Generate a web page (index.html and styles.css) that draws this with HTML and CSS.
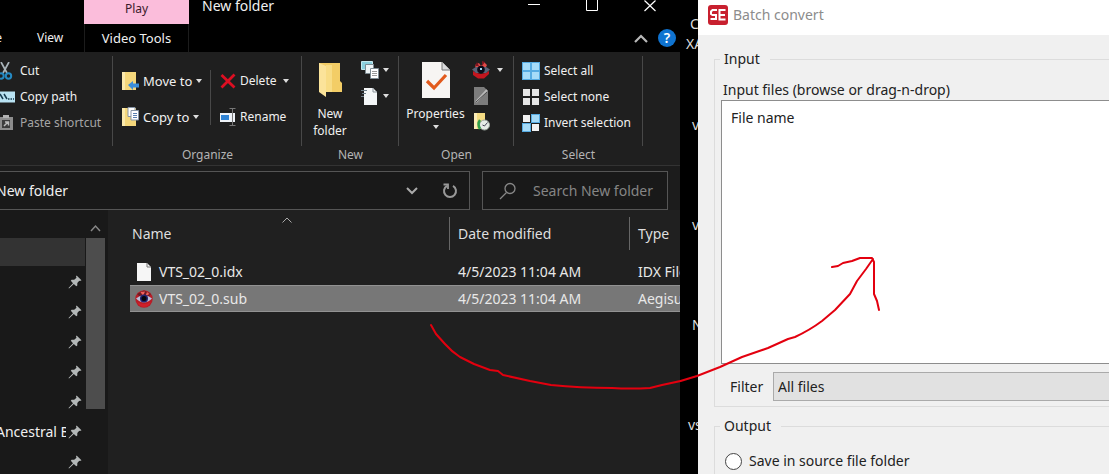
FILE: index.html
```html
<!DOCTYPE html>
<html lang="en">
<head>
<meta charset="utf-8">
<title>Batch convert</title>
<link rel="stylesheet" href="styles.css">
</head>
<body>
<svg class="defs" aria-hidden="true">
  <symbol id="pin" viewBox="0 0 14 14"><path d="M8.600 0.500 13.500 5.200 12 6 11.300 5.700 9.300 8 9.300 10.600 8.300 11.300 5.800 9 1 13.500 0.500 13 5 8.200 2.800 5.800 3.600 4.700 6.200 4.800 8.500 2.800 8 1.500Z" fill="#b4b8b8"/></symbol>
  <symbol id="eye" viewBox="0 0 18 18"><circle cx="9" cy="9" r="8.700" fill="#b81c26"/><path d="M2 4 9 .500l7 3.500-3 3H5z" fill="#6e1a22"/><path d="M5.500 2 8 6 10 1.500zM12 2l-1.500 4 4-2z" fill="#f0605c"/><path d="M1 8.500Q5 5 9 5t8 3.500Q13 12.500 9 12.500T1 8.500Z" fill="#b9bed8"/><circle cx="9" cy="8.500" r="4" fill="#22226e"/><circle cx="9" cy="8.500" r="2.500" fill="#06060c"/><path d="M2 12q7 4 14 0l-2 3q-5 4-10 0z" fill="#cf2029"/></symbol>
  <symbol id="aegisub" viewBox="0 0 18 18"><path d="M1 10q8 6 16 0v3l-5 4.500H6L1 14z" fill="#c3161f"/><path d="M3 4l4-2 2 3 3-4 3 3-2 4H4z" fill="#e04a48"/><path d="M5 1l2 4H3zM10 0l3 1-3 4z" fill="#7e1620"/><path d="M0 8.500 4 6h10l4 2.500-4 3.500H4z" fill="#5a6378"/><circle cx="9" cy="8.500" r="3.800" fill="#0b0b18"/><path d="M8 7h2v2H8z" fill="#9cd8ee"/></symbol>
  <symbol id="page" viewBox="0 0 16 18"><path d="M1 0h10l4 4v14H1z" fill="#f6f6f6"/><path d="M11 0v4h4" fill="none" stroke="#777"/></symbol>
</svg>
<div class="desktop">
  <main class="explorer">
    <header class="top">
      <span class="context-tab">Play</span>
      <h1 class="title">New folder</h1>
      <div class="win-buttons">
        <button aria-label="Minimize"><svg width="12" height="12"><path d="M0 4.500h12" stroke="#fff"/></svg></button>
        <button aria-label="Maximize"><svg width="12" height="12"><path d="M.5-2v12.500h11V-2" fill="none" stroke="#fff"/></svg></button>
        <button aria-label="Close"><svg width="12" height="12"><path d="M.5.500l11 10.500M11.500.500.500 11" stroke="#fff" stroke-width="1.200"/></svg></button>
      </div>
      <nav class="tabs"><button class="share">e</button><button>View</button></nav>
      <button class="tools-tab">Video Tools</button>
      <div class="help-row">
        <button aria-label="Collapse ribbon"><svg width="14" height="9"><path d="M1 8l6-6 6 6" fill="none" stroke="#b8b8b8" stroke-width="2.200"/></svg></button>
        <button class="help" aria-label="Help">?</button>
      </div>
    </header>

    <section class="ribbon">
      <div class="group clipboard">
        <div class="tools stack">
          <button class="tool"><svg width="16" height="18"><path d="M1 0l6 11M9 0 3 11" stroke="#a9b4ba" stroke-width="1.700"/><circle cx="1" cy="14" r="2.700" fill="none" stroke="#2589c2" stroke-width="2"/><circle cx="8.500" cy="14" r="2.700" fill="none" stroke="#2589c2" stroke-width="2"/></svg>Cut</button>
          <button class="tool"><svg width="16" height="12"><path d="M0 .500h15v11H0z" fill="#b9e3f3"/><path d="M0 3l3 5M4 3l3 5" stroke="#163c50" stroke-width="1.500"/><path d="M8 8h1.500M10.500 8H12M13 8h1" stroke="#163c50" stroke-width="1.500"/></svg>Copy path</button>
          <button class="tool dim"><svg width="16" height="18"><path d="M0 3h13v13H0z" fill="#8d8d8d"/><path d="M3 1h6v3H3z" fill="#b2b2b2"/><path d="M2 6h8v8H2z" fill="#3c3c3c"/><path d="M4 12l4-4M5 8h3.500v3.500" fill="none" stroke="#bbb" stroke-width="1.500"/></svg>Paste shortcut</button>
        </div>
        <div class="group-label"></div>
      </div>
      <div class="group organize">
        <div class="tools">
          <div class="pair first">
            <button class="tool"><svg width="18" height="20"><path d="M1 1h14v18H1z" fill="#f5d77b"/><path d="M1 1h3v18H1z" fill="#fbe9ac"/><path d="M7 14l5-4v2.500h6v4h-6V19z" fill="#3b8edb"/></svg>Move to<i class="caret"></i></button>
            <button class="tool"><svg width="18" height="20"><path d="M1 1h14v18H1z" fill="#f5d77b"/><path d="M1 1h3v18H1z" fill="#fbe9ac"/><path d="M7 .500h7v9H7z" fill="#fff" stroke="#8795a6"/><path d="M10 3.500h7.500v9.500H10z" fill="#fff" stroke="#8795a6"/><path d="M12 6.500h4M12 8.500h4M12 10.500h4" stroke="#5a7fb0"/></svg>Copy to<i class="caret"></i></button>
          </div>
          <div class="pair">
            <button class="tool"><svg width="16" height="16"><path d="M1.500 2l13 12.500M14.500 1.500 1.500 14.500" stroke="#dd0f22" stroke-width="2.800"/></svg><span>Delete</span><i class="caret far"></i></button>
            <button class="tool"><svg width="16" height="18"><path d="M0 5h15v9H0z" fill="#eef3f8"/><path d="M1 7h8v5H1z" fill="#2f83d4"/><path d="M9.500.500h6M9.500 17.500h6M12.500 1v16" stroke="#777"/></svg>Rename</button>
          </div>
        </div>
        <div class="group-label">Organize</div>
      </div>
      <div class="group new">
        <div class="tools">
          <button class="big"><svg width="24" height="36"><path d="M1 1h21v18l2 2v9H1z" fill="#f3cd66"/><path d="M1 1l7 3v31l-7-5z" fill="#fbe39a"/><path d="M8 3h6v27H8z" fill="#f8dc85"/></svg>New<br>folder</button>
          <div class="mini">
            <button class="tool"><svg width="18" height="18"><path d="M.500.500h11v8H.500z" fill="#8bd0de" stroke="#c5e8ee"/><path d="M4.500 3.500h8v9h-8z" fill="#eef4f6" stroke="#7d8b92"/><path d="M9.500 7.500h8v10h-8z" fill="#fff" stroke="#7d8b92"/><path d="M11 10.500h5M11 12.500h5M11 14.500h5" stroke="#999"/></svg><i class="caret" title="New item"></i></button>
            <button class="tool"><svg width="18" height="18"><path d="M3 1h9l4 4v13H3z" fill="#f4f6f7"/><path d="M12 1v4h4" fill="none" stroke="#89939a"/><path d="M0 3.500h6M1 6.500h4M0 9.500h3" stroke="#6e7d88"/></svg><i class="caret" title="Easy access"></i></button>
          </div>
        </div>
        <div class="group-label">New</div>
      </div>
      <div class="group open">
        <div class="tools">
          <button class="big"><svg width="30" height="36"><path d="M1 0h20l8 8v28H1z" fill="#f7f5f3"/><path d="M21 0v8h8" fill="#d9dadb" stroke="#777"/><path d="M6 19l7 7 12-13" fill="none" stroke="#e25a1c" stroke-width="3.200"/></svg>Properties<i class="caret"></i></button>
          <div class="mini">
            <button class="tool"><svg width="18" height="18"><use href="#aegisub"/></svg><i class="caret" title="Open"></i></button>
            <button class="tool" aria-label="Edit"><svg width="18" height="18"><path d="M2 0h10l4 4v14H2z" fill="#7c7c7c"/><path d="M4 15 15 3" stroke="#bababa" stroke-width="2"/><path d="M4 15 15 5" stroke="#4c4c4c"/></svg></button>
            <button class="tool" aria-label="History"><svg width="18" height="18"><path d="M2 0h11v16H2z" fill="#f5dc83"/><path d="M2 0h3v16H2z" fill="#fcedb8"/><circle cx="12.500" cy="12" r="5" fill="#e6ece7" stroke="#9aa59c"/><path d="M8 7q-3 4 0 9" fill="none" stroke="#2fa04a" stroke-width="2.500"/><path d="M12.500 13l3-3.500M12.500 13l-2-1" stroke="#445"/></svg></button>
          </div>
        </div>
        <div class="group-label">Open</div>
      </div>
      <div class="group select">
        <div class="tools stack">
          <button class="tool"><svg width="18" height="18"><path d="M0 0h18v18H0z" fill="#56abe2"/><path d="M1 1h7v7H1zM10 1h7v7h-7zM1 10h7v7H1zM10 10h7v7h-7z" fill="#a6dbf8"/></svg>Select all</button>
          <button class="tool"><svg width="18" height="18"><path d="M1 1h7v7H1zM10 1h7v7h-7zM1 10h7v7H1zM10 10h7v7h-7z" fill="#e6e6e6"/></svg>Select none</button>
          <button class="tool"><svg width="18" height="18"><path d="M9 0h9v9H9zM0 9h9v9H0z" fill="#56abe2"/><path d="M10 1h7v7h-7zM1 10h7v7H1z" fill="#a6dbf8"/><path d="M1 1h7v7H1zM10 10h7v7h-7z" fill="#f2f2f2"/></svg>Invert selection</button>
        </div>
        <div class="group-label">Select</div>
      </div>
    </section>

    <div class="address-bar">
      <div class="path"><span>New folder</span>
        <button aria-label="Previous locations"><svg width="12" height="8"><path d="M1 1l5 5 5-5" fill="none" stroke="#aaa" stroke-width="2"/></svg></button>
        <button aria-label="Refresh"><svg width="16" height="16"><path d="M11 2.800A6 6 0 1 1 5 2.800" fill="none" stroke="#999" stroke-width="2"/><path d="M1.500 1.500H6V6" fill="none" stroke="#999" stroke-width="1.800"/></svg></button>
      </div>
      <label class="search"><svg width="18" height="18"><circle cx="11" cy="6.500" r="5" fill="none" stroke="#888" stroke-width="1.300"/><path d="M7.500 10.500 1 17" stroke="#888" stroke-width="1.300"/></svg><input type="text" placeholder="Search New folder" aria-label="Search New folder"></label>
    </div>

    <div class="content">
      <ul class="nav">
        <li class="current"></li>
        <li><svg class="pin"><use href="#pin"/></svg></li>
        <li><svg class="pin"><use href="#pin"/></svg></li>
        <li><svg class="pin"><use href="#pin"/></svg></li>
        <li><svg class="pin"><use href="#pin"/></svg></li>
        <li><svg class="pin"><use href="#pin"/></svg></li>
        <li><span>Ancestral B</span><svg class="pin"><use href="#pin"/></svg></li>
        <li><svg class="pin"><use href="#pin"/></svg></li>
      </ul>
      <div class="scrollbar"><svg width="11" height="8"><path d="M1 7l4.500-5L10 7" fill="none" stroke="#888" stroke-width="1.500"/></svg><div class="thumb"></div></div>
      <div class="files">
        <table>
          <colgroup><col class="c-name"><col class="c-date"><col class="c-type"></colgroup>
          <thead><tr><th>Name<svg class="sort" width="10" height="6"><path d="M.500 5.500 5 1l4.500 4.500" fill="none" stroke="#aaa"/></svg></th><th>Date modified</th><th>Type</th></tr></thead>
          <tbody>
            <tr><td><span class="file"><svg width="18" height="18"><use href="#page"/></svg>VTS_02_0.idx</span></td><td>4/5/2023 11:04 AM</td><td>IDX File</td></tr>
            <tr class="selected"><td><span class="file"><svg width="18" height="18"><use href="#eye"/></svg>VTS_02_0.sub</span></td><td>4/5/2023 11:04 AM</td><td>Aegisub</td></tr>
          </tbody>
        </table>
      </div>
    </div>
  </main>

  <ul class="backdrop">
    <li><span class="inset">C</span><br>XA</li><li>v</li><li>v</li><li>N</li><li class="wide">vs</li>
  </ul>

  <section class="dialog">
    <header class="dialog-title"><svg width="20" height="20"><rect width="20" height="20" rx="3" fill="#c8202f"/><path d="M9 5H4.500L3 6.500V9l1.500 1H8v4H2.500M17.500 5H11.500v9.500H17.500M11 10h6" fill="none" stroke="#fff" stroke-width="2"/></svg><h2>Batch convert</h2></header>
    <form class="dialog-body">
      <fieldset class="input">
        <legend>Input</legend>
        <label class="files-label" for="filelist">Input files (browse or drag-n-drop)</label>
        <div class="listbox" id="filelist" tabindex="0">File name</div>
        <div class="filter"><label for="filter">Filter</label><select id="filter"><option>All files</option></select></div>
      </fieldset>
      <fieldset class="output">
        <legend>Output</legend>
        <label class="radio"><input type="radio" name="dest">Save in source file folder</label>
      </fieldset>
    </form>
  </section>

  <svg class="arrow" viewBox="0 0 1109 474" preserveAspectRatio="xMinYMin meet" aria-hidden="true">
    <path d="M431 325 436 334 445 344Q452 352 460 357L474 364 490 370 498 371 503 375 530 381 551 385Q580 388 612 388 630 389 650 388L662 385Q680 382 697 376L720 367 742 357 768 348 788 339 795 337Q810 330 822 321L835 310 850 294 857 281 866 269 873 259M832 267 838 266 843 263 852 261 860 258H872L874 262V294L877 301 879 310"/>
  </svg>
</div>
</body>
</html>
```
FILE: styles.css
```css
* { box-sizing: border-box; }
body { margin: 0; background: #000; font: 14px/18px "Noto Sans", "Open Sans", sans-serif; }
button { border: 0; padding: 0; margin: 0; background: none; color: inherit; font: inherit; }
ul { list-style: none; margin: 0; padding: 0; }
h1, h2 { margin: 0; font-weight: 400; }
svg { flex: none; display: block; }
.defs { position: absolute; width: 0; height: 0; }

.desktop { position: relative; display: grid; grid-template-columns: 680fr 18px 411fr; height: 100vh; overflow: hidden; }

/* File explorer */
.explorer { display: flex; flex-direction: column; min-width: 0; overflow: hidden; background: #1c1c1c; color: #f0f0f0; }
.top { display: grid; grid-template-columns: 84px 105px 1fr auto; grid-template-rows: 24px 28px; background: #000; }
.context-tab { grid-column: 2; display: grid; place-items: center; padding-bottom: 6px; background: #fbbddb; color: #3a1a2a; font-size: 12px; }
.title { padding-left: 13px; font-size: 14px; line-height: 12px; }
.win-buttons { display: flex; gap: 46px; padding-right: 24px; align-items: start; }
.tabs { grid-row: 2; display: flex; gap: 35px; font-size: 12px; }
.tabs .share { width: 2px; direction: rtl; overflow: hidden; }
.tools-tab { grid-row: 2; border: solid #1c1c1c; border-width: 0 1px; font-size: 13px; }
.help-row { grid-row: 2; grid-column: 3 / 5; display: flex; justify-content: flex-end; align-items: center; gap: 10px; padding-right: 4px; }
.help { width: 18px; height: 18px; border-radius: 50%; background: #0f73d0; color: #fff; font-weight: 600; font-size: 14px; }

.ribbon { display: flex; padding-top: 4px; background: #1f1f1f; border-bottom: 1px solid #333; font-size: 12px; }
.group { display: flex; flex-direction: column; }
.tools { display: flex; height: 90px; border-right: 1px solid #484848; }
.stack { flex-direction: column; padding-top: 2px; }
.stack .tool, .mini .tool { height: 26px; }
.group-label { height: 19px; text-align: center; color: #b4b4b4; }
.tool { display: flex; align-items: center; gap: 4px; white-space: nowrap; }
.clipboard { width: 113px; }
.dim { color: #a5a5a5; }
.organize { width: 189px; }
.pair { padding: 7px 0 0 9px; }
.pair .tool { height: 36px; }
.pair.first { width: 98px; padding-left: 8px; background: linear-gradient(#484848, #484848) right 14px / 1px 55px no-repeat; }
.first .tool { font-size: 13px; }
.new { width: 97px; }
.open { width: 115px; }
.select { width: 129px; }
.select .stack { padding-left: 8px; }
.caret { width: 0; height: 0; border: solid transparent; border-width: 4px 3px 0; border-top-color: #ddd; }
.far { margin-left: 2px; }
.big { display: flex; flex-direction: column; align-items: center; line-height: 17px; padding-top: 6px; }
.big svg { margin-bottom: 7px; }
.big .caret { margin-top: 3px; }
.new .big { width: 56px; }
.open .big { width: 73px; }
.mini { padding: 1px 0 0 3px; }
.open .mini { padding-left: 0; }
.open .mini .caret { margin-left: 3px; }

.address-bar { display: flex; gap: 12px; padding: 5px 12px 0 0; font-size: 14px; }
.path { display: flex; flex: 1; align-items: center; gap: 24px; height: 39px; padding-right: 11px; border: 1px solid #555; border-left: 0; background: #191919; overflow: hidden; }
.path span { flex: 1; margin-left: -4px; }
.search { display: flex; align-items: center; gap: 16px; width: 186px; padding-left: 16px; border: 1px solid #555; background: #191919; }
.search input { width: 130px; padding: 0; border: 0; background: none; color: #888; font: inherit; }
.search input::placeholder { color: #858585; opacity: 1; }

.content { display: flex; flex: 1; min-height: 0; }
.nav { width: 85px; padding-top: 28px; background: #191919; }
.nav li { display: flex; align-items: center; justify-content: flex-end; gap: 2px; height: 30px; padding-right: 3px; }
.nav .current { height: 28px; margin-bottom: 1px; background: #333; }
.nav span { flex: 1; overflow: hidden; white-space: nowrap; margin-left: -4px; }
.pin { width: 14px; height: 14px; }
.scrollbar { width: 23px; padding: 14px 3px 0 1px; background: #191919; }
.scrollbar svg { margin: 0 auto 6px; }
.thumb { height: 171px; background: #4d4d4d; }
.files { flex: 1; min-width: 0; padding-left: 22px; padding-top: 7px; background: #202020; overflow: hidden; }
table { width: 100%; table-layout: fixed; border-collapse: separate; border-spacing: 0; }
.c-name { width: 320px; }
.c-date { width: 180px; }
th, td { padding: 0 0 0 8px; text-align: left; white-space: nowrap; overflow: hidden; font-weight: 400; }
th:first-child { padding-left: 2px; }
thead th { position: relative; height: 33px; border-right: 1px solid #666; color: #dedede; }
th:last-child { border-right: 0; }
.sort { position: absolute; top: 0; right: 157px; }
thead::after { content: ""; display: block; height: 8px; }
tbody td { height: 27px; color: #e8e8e8; }
td:first-child { padding-left: 5px; }
.file { display: flex; align-items: center; gap: 6px; }
.selected td { background: #777; border: solid #929292; border-width: 1px 0; }

.backdrop { color: #ddd; line-height: 20px; overflow: hidden; }
.backdrop li { height: 100px; padding: 40px 0 0 12px; overflow: hidden; }
.backdrop .wide { padding-left: 8px; }
.backdrop li:first-child { height: 75px; padding: 14px 0 0 6px; }
.inset { padding-left: 4px; }

/* Batch convert dialog */
.dialog { min-width: 0; background: #f0f0f0; color: #222; overflow: hidden; }
.dialog-title { display: flex; align-items: center; gap: 5px; height: 35px; padding: 0 0 6px 10px; background: #fff; color: #8c8c8c; }
.dialog-title h2 { font-size: 14px; }
.dialog-body { padding: 15px 0 0 16px; }
fieldset { margin: 0; min-width: 0; border: 1px solid #dcdcdc; border-right: 0; }
legend { padding: 0 10px 0 4px; }
.input { padding: 13px 0 5px 6px; }
.output { margin-top: 10px; padding: 17px 0 40px 10px; }
.input legend { margin-left: -1px; }
.output legend { margin-left: -5px; }
.files-label { display: block; padding-left: 2px; }
.listbox { height: 264px; padding: 8px 9px; margin-top: 1px; border: 1px solid #8d8d8d; border-right: 0; background: #fff; }
.filter { display: flex; align-items: center; padding: 8px 0 0 9px; }
.filter label { width: 43px; }
select { flex: 1; min-width: 0; height: 29px; padding: 0 4px; border: 1px solid #aaa; border-right: 0; border-radius: 0; appearance: none; background: #e1e1e1; color: #222; font: inherit; }
.radio { display: flex; align-items: center; gap: 7px; }
.radio input { appearance: none; width: 17px; height: 17px; margin: 0; border: 1px solid #444; border-radius: 50%; background: #fff; }

.arrow { position: absolute; inset: 0; width: 100%; pointer-events: none; }
.arrow path { fill: none; stroke: #e3000f; stroke-width: 2; stroke-linecap: round; stroke-linejoin: round; }
```
